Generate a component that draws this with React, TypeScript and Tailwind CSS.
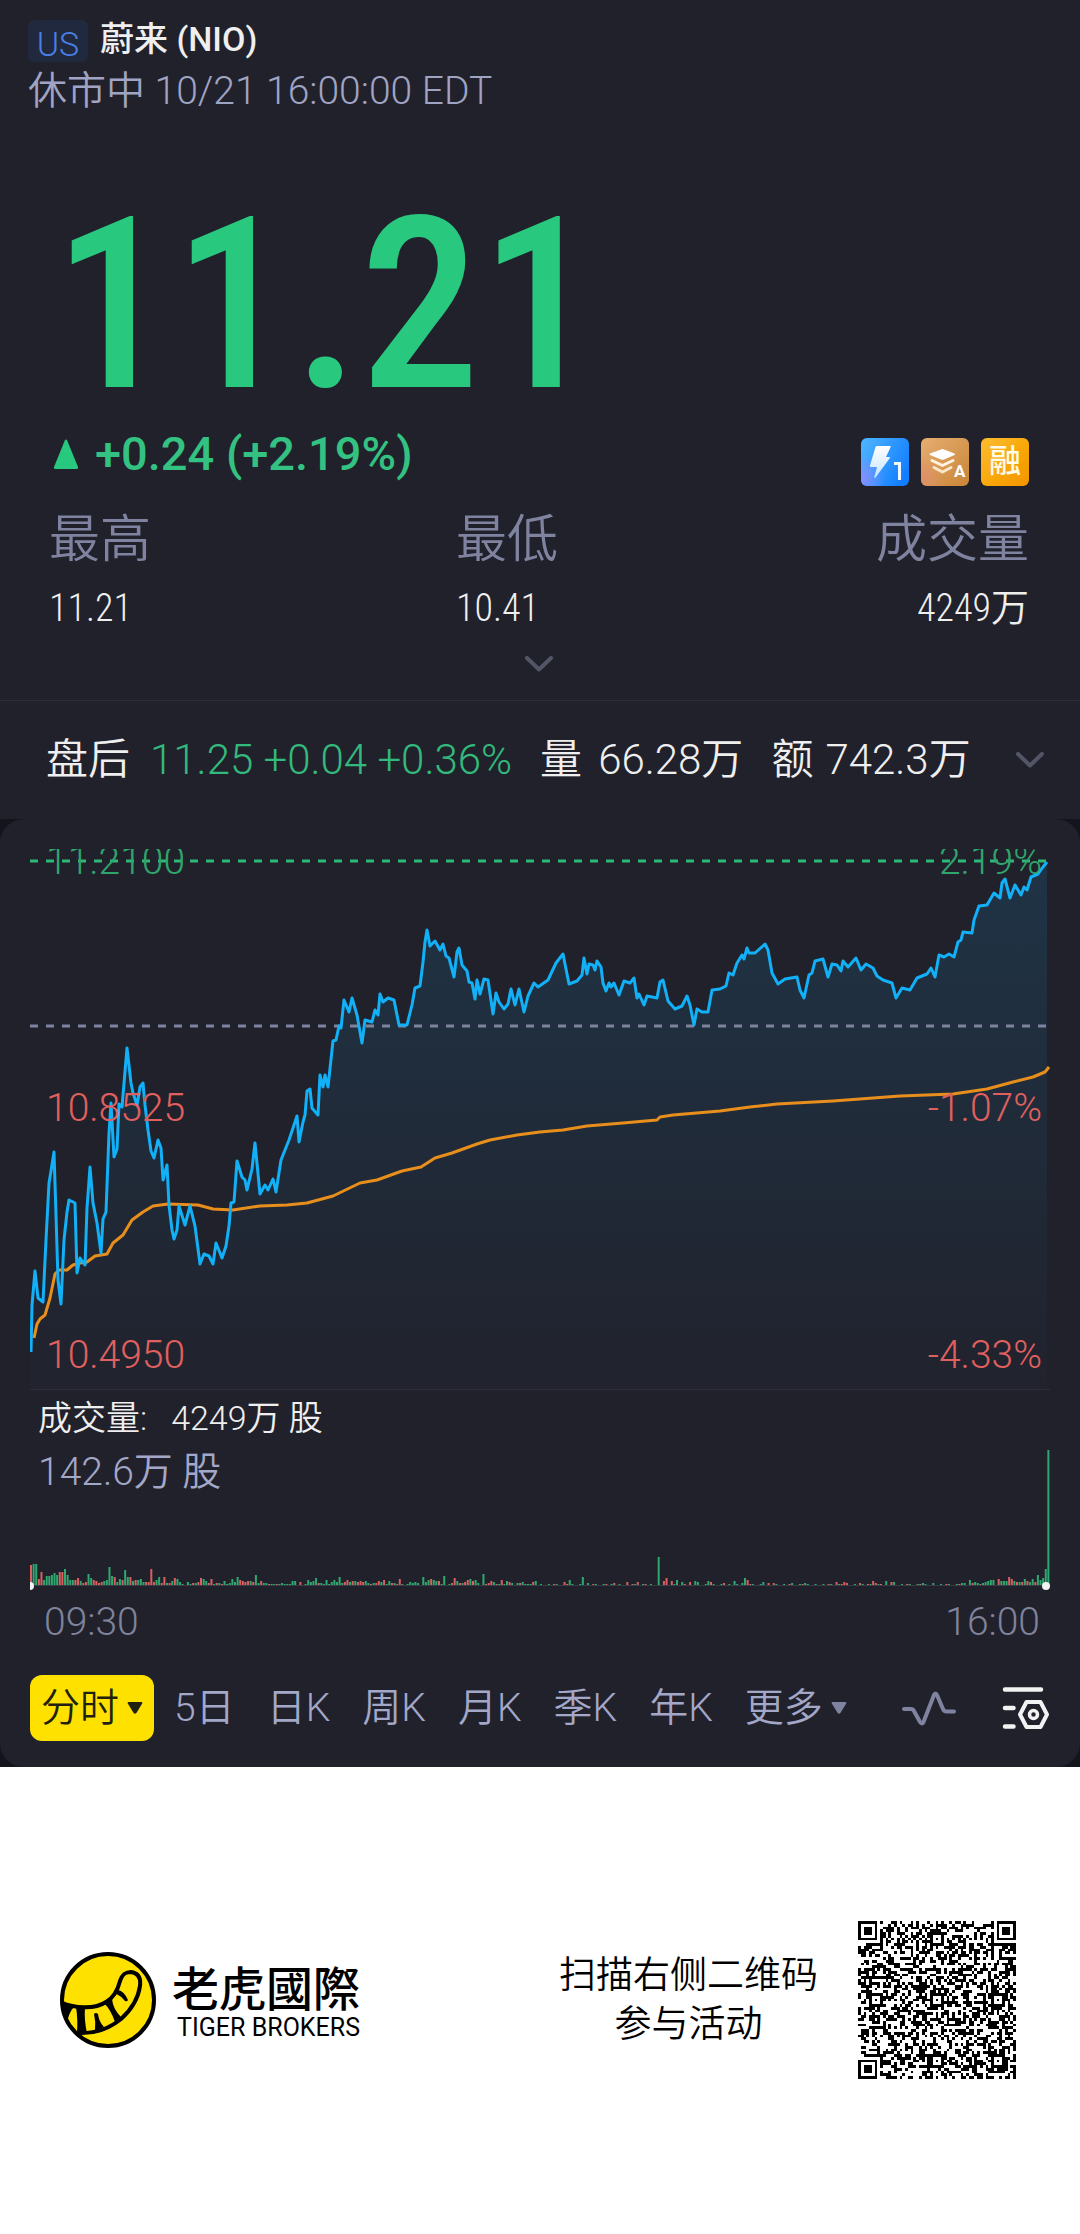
import { useId, useState } from 'react';

type Point = [number, number];

const CHART_W = 1020;
const CHART_H = 540;

const PRICE: Point[] = [
  [1, 503], [2, 456], [5, 422], [8, 449], [13, 453], [16, 391], [19, 334], [21, 322], [24, 303], [26, 366],
  [28, 431], [31, 455], [34, 391], [37, 363], [39, 351], [45, 354], [47, 424], [50, 409], [55, 416], [57, 359],
  [60, 318], [63, 354], [67, 374], [71, 404], [73, 370], [76, 363], [79, 284], [81, 254], [84, 308], [87, 300],
  [89, 255], [92, 258], [97, 199], [101, 234], [103, 244], [107, 256], [110, 238], [113, 234], [115, 256], [118, 281],
  [121, 302], [124, 309], [128, 291], [131, 299], [133, 331], [137, 316], [139, 356], [142, 381], [144, 390], [147, 381],
  [149, 357], [155, 376], [160, 357], [165, 377], [170, 415], [174, 405], [179, 407], [183, 415], [186, 394], [192, 409],
  [196, 397], [199, 377], [201, 354], [204, 353], [207, 312], [212, 328], [215, 331], [217, 341], [222, 320], [225, 294],
  [230, 345], [235, 336], [238, 341], [243, 330], [246, 343], [251, 311], [259, 291], [267, 267], [269, 293], [273, 273],
  [275, 266], [277, 242], [280, 240], [282, 259], [288, 266], [290, 226], [293, 238], [295, 226], [298, 238], [303, 192],
  [306, 191], [309, 177], [311, 179], [314, 151], [319, 163], [322, 149], [327, 166], [332, 194], [335, 171], [342, 173],
  [345, 161], [348, 166], [350, 145], [353, 153], [358, 149], [364, 151], [369, 176], [377, 176], [382, 156], [385, 139],
  [390, 137], [393, 113], [395, 93], [397, 81], [400, 97], [405, 92], [410, 101], [413, 95], [416, 107], [419, 109],
  [424, 128], [427, 103], [429, 99], [432, 116], [437, 122], [439, 133], [442, 134], [445, 150], [447, 131], [450, 145],
  [454, 130], [458, 131], [463, 165], [466, 144], [469, 153], [474, 160], [478, 155], [481, 140], [485, 156], [489, 140],
  [494, 163], [498, 147], [504, 134], [508, 138], [518, 131], [526, 114], [533, 105], [539, 135], [547, 132], [552, 126],
  [554, 109], [557, 125], [559, 115], [563, 116], [565, 121], [567, 112], [571, 118], [573, 134], [576, 142], [579, 134],
  [581, 138], [584, 134], [589, 146], [594, 132], [600, 134], [604, 129], [607, 149], [609, 145], [614, 156], [617, 147],
  [627, 149], [630, 133], [633, 131], [638, 152], [645, 160], [652, 157], [657, 147], [660, 156], [664, 176], [667, 160],
  [672, 163], [678, 163], [682, 141], [690, 140], [696, 137], [699, 124], [703, 126], [707, 114], [712, 106], [714, 110],
  [717, 99], [719, 104], [725, 104], [735, 95], [738, 101], [742, 124], [748, 135], [755, 130], [767, 128], [770, 141],
  [774, 149], [779, 126], [782, 124], [785, 112], [793, 110], [798, 128], [802, 115], [807, 116], [811, 122], [813, 112],
  [818, 118], [826, 109], [831, 121], [836, 115], [843, 119], [847, 127], [853, 131], [862, 134], [866, 149], [872, 139],
  [880, 141], [887, 129], [897, 125], [901, 119], [905, 128], [909, 106], [914, 108], [919, 105], [924, 108], [928, 93],
  [931, 91], [933, 83], [942, 84], [944, 71], [949, 57], [957, 56], [964, 44], [970, 49], [972, 34], [975, 30],
  [980, 49], [985, 36], [991, 46], [994, 38], [997, 41], [1001, 28], [1008, 25], [1013, 18], [1017, 13],
];

const AVERAGE: Point[] = [
  [4, 489], [7, 475], [10, 470], [15, 466], [20, 449], [25, 425], [29, 421], [37, 421], [43, 416], [50, 414],
  [57, 413], [65, 407], [77, 405], [83, 394], [93, 386], [102, 371], [113, 363], [123, 357], [138, 355], [168, 356],
  [183, 360], [203, 361], [230, 357], [257, 356], [277, 354], [303, 347], [330, 334], [347, 331], [372, 322], [391, 318],
  [405, 309], [422, 304], [447, 295], [460, 291], [487, 286], [510, 283], [533, 281], [557, 277], [593, 274], [627, 271],
  [630, 268], [643, 266], [690, 262], [720, 258], [747, 255], [803, 252], [870, 247], [923, 245], [957, 240], [983, 233],
  [1003, 228], [1015, 223], [1019, 218],
];

// bar heights minute by minute, negative = down tick
const VOLUME_OPEN = [
  -20, 21, 21, -6, -13, 5, 9, 9, 10, 12, 10, -13, -13, 16, 10, 5, 5, -5, -7, 4, -2, -3, 11, 7, -5, -4, -2, -3, 4, 5,
  18, 9, -8, 3, 6, -5, 15, 8, -8, 4, -5, 5, 6, 3, -3, -3, -16, -3, 5, 8, -2, -8, 2, -2, 4, -7, 6, 3, 1, 0,
  3, 1, -2, 2, -3, -7, 6, 4, -2, -6, 1, -2, 2, -1, 4, 1, 2, 6, 3, 8, -5, -4, -3, -4, 4, -3, 10, 2, -4, 2,
  2, -1, 1, 1, -1, 1, 2, 1, 1, 1, 4, 4, 0, -3, 0, 1, 5, 3, 4, 7, -2, 2, 1, 5, 1, 3, 5, 3, 8, 2,
  -3, -5, 3, -4, 4, -3, -4, -3, 4, 2, -1, 2, -2, -4, 3, -5, 1, 4, -2, 2, -1, -6, 1, 0, 1, 3, 2, 3, 2, 0,
  8, 3, 5, -6, 5, 4, -4, 1, 9, 0, 1, -2, -7, 4, -2, 2, -3, -5, 6, -4, 5, 2, 0, 11, -1, -2, -4, 3, -1, 1,
  -5, 1, 4, -3, 2, 0, 2, -2, 3, 1, 1, 1, -3, 4,
];
const VOLUME_CLOSE = [
  2, 2, 0, 5, -2, 3, 2, -1, 2, 3, 4, 5, 5, 0, -6, 4, 4, 4, -8, -6,
  4, -3, 3, -3, 6, -4, 3, 6, -3, 10, 5, 7, 16,
];
const VOLUME_SPIKES: Record<number, number> = {
  204: -3, 206: 5, 211: 8, 213: 2, 223: -2, 228: -3, 232: -3, 240: 28, 242: -4, 243: -7, 245: -4, 247: 5,
  249: 3, 252: -3, 254: 4, 255: 3, 259: 4, 260: -3, 265: -2, 269: 4, 272: 2, 273: 7, 274: -5, 280: 3, 282: -2,
  284: -2, 291: 2, 296: 2, 308: -3, 311: -3, 312: -2, 317: -2, 322: -4, 323: -2, 327: 4, 329: -3, 330: 3, 341: 2, 345: 2,
};
const MINUTES = 390;

const volumeAt = (i: number) => {
  if (i === MINUTES - 1) return 135;
  if (i < VOLUME_OPEN.length) return VOLUME_OPEN[i];
  const fromClose = i - (MINUTES - 1 - VOLUME_CLOSE.length);
  if (fromClose >= 0) return VOLUME_CLOSE[fromClose];
  if (VOLUME_SPIKES[i] !== undefined) return VOLUME_SPIKES[i];
  return i % 3 === 0 ? 1 : i % 5 === 0 ? -1 : 0;
};

const toPath = (points: Point[]) => points.map(([x, y], i) => `${i ? 'L' : 'M'}${x} ${y}`).join('');

const STATS = [
  { label: '最高', value: '11.21', align: 'text-left' },
  { label: '最低', value: '10.41', align: 'text-left' },
  { label: '成交量', value: '4249万', align: 'text-right' },
];

const PERIODS = ['5日', '日K', '周K', '月K', '季K', '年K'];

function Chevron() {
  return (
    <svg width="28" height="16" viewBox="0 0 28 16" fill="none" aria-hidden="true">
      <path d="M2 2l12 11.5L26 2" stroke="#515566" strokeWidth="4" strokeLinecap="round" strokeLinejoin="round" />
    </svg>
  );
}

function Caret() {
  return (
    <svg width="16" height="12" viewBox="0 0 16 12" fill="currentColor" aria-hidden="true">
      <path d="M2 0h12q2 0 1.200 1.600L9.400 11q-1.400 1.600-2.800 0L.8 1.600Q0 0 2 0z" />
    </svg>
  );
}

function Badges() {
  return (
    <div className="flex gap-3 mt-3">
      <svg width="48" height="48" viewBox="0 0 48 48" role="img" aria-label="Level 1">
        <defs>
          <linearGradient id="l1" x1="0" y1="0.200" x2="1" y2="0.700">
            <stop offset="0" stopColor="#4cb2ff" />
            <stop offset="1" stopColor="#117dff" />
          </linearGradient>
          <radialGradient id="l1glow" cx="0" cy="0.850" r="0.500">
            <stop offset="0" stopColor="#8a8cff" />
            <stop offset="1" stopColor="#8a8cff" stopOpacity="0" />
          </radialGradient>
          <linearGradient id="bolt" x1="0" y1="0" x2="0" y2="1">
            <stop offset="0" stopColor="#fff" />
            <stop offset="1" stopColor="#c4e4ff" />
          </linearGradient>
        </defs>
        <rect width="48" height="48" rx="6" fill="url(#l1)" />
        <rect width="48" height="48" rx="6" fill="url(#l1glow)" />
        <path d="M16 8h13q1 0 .6 1L25 19h3q1.500 0 .6 1.400L14.500 39.500q-1.500 1.300-1.200-.5L16 29h-6q-1.500 0-1-1.500L14.500 9q.4-1 1.500-1z" fill="url(#bolt)" />
        <path d="M33 25.500h5.500V42" fill="none" stroke="#f2f9ff" strokeWidth="3" />
      </svg>
      <svg width="48" height="48" viewBox="0 0 48 48" role="img" aria-label="Stack A">
        <defs>
          <linearGradient id="la" x1="0" y1="0" x2="1" y2="1">
            <stop offset="0" stopColor="#e6ae72" />
            <stop offset="1" stopColor="#c98536" />
          </linearGradient>
          <radialGradient id="laglow" cx="0" cy="0.850" r="0.450">
            <stop offset="0" stopColor="#de8f6c" />
            <stop offset="1" stopColor="#de8f6c" stopOpacity="0" />
          </radialGradient>
        </defs>
        <rect width="48" height="48" rx="6" fill="url(#la)" />
        <rect width="48" height="48" rx="6" fill="url(#laglow)" />
        <path d="M20 11.400q1.500-.6 3 0l10.500 4q1.400.8 0 1.600L23 21.500q-1.500.7-3 0L9 17q-1.400-.8 0-1.600z" fill="#fff" />
        <path d="M11 22.500l10.500 5 10.500-5" fill="none" stroke="#fff3e0" strokeWidth="3" strokeLinecap="round" strokeLinejoin="round" />
        <path d="M13 29.500l8.500 4.500 8.500-4.500" fill="none" stroke="#fbe6cc" strokeWidth="3" strokeLinecap="round" strokeLinejoin="round" />
        <text x="33" y="39" fontSize="17" fontWeight="700" fontFamily="Roboto, sans-serif" fill="#fff">A</text>
      </svg>
      <span className="w-12 h-12 rounded-md bg-linear-to-br from-[#fdbd2e] via-[#f9a90a] to-[#f39400] text-[#fffbe6] text-[32px] leading-[46px] font-medium text-center">
        融
      </span>
    </div>
  );
}

function PriceChart() {
  const fill = useId();
  return (
    <div className="relative mx-[30px] h-[541px] overflow-hidden border-b border-[#2e2e3b]">
      <svg className="block w-full h-full" viewBox={`0 0 ${CHART_W} ${CHART_H}`} preserveAspectRatio="none" aria-hidden="true">
        <defs>
          <linearGradient id={fill} gradientUnits="userSpaceOnUse" x1="0" y1="12" x2="0" y2={CHART_H}>
            <stop offset="0" stopColor="#12b0f7" stopOpacity="0.130" />
            <stop offset="1" stopColor="#12b0f7" stopOpacity="0.010" />
          </linearGradient>
        </defs>
        <path d={`${toPath(PRICE)}V${CHART_H}H1z`} fill={`url(#${fill})`} />
        <path d={`M0 12H${CHART_W}`} stroke="#2fb878" strokeWidth="3" strokeDasharray="8 8" />
        <path d={`M0 177H${CHART_W}`} stroke="#7f839f" strokeWidth="3" strokeDasharray="8 8" />
        <path d={toPath(AVERAGE)} fill="none" stroke="#e88e1c" strokeWidth="3" strokeLinejoin="round" />
        <path d={toPath(PRICE)} fill="none" stroke="#12b0f7" strokeWidth="3" strokeLinejoin="round" />
      </svg>
      <div className="absolute inset-x-4 -top-2 bottom-[14px] flex justify-between text-[39px] leading-10 text-[#e0605f]">
        <div className="flex flex-col justify-between">
          <span className="text-[#2fa56d]">11.2100</span>
          <span>10.8525</span>
          <span>10.4950</span>
        </div>
        <div className="flex flex-col justify-between text-right -mr-2">
          <span className="text-[#2fa56d]">2.19%</span>
          <span>-1.07%</span>
          <span>-4.33%</span>
        </div>
      </div>
    </div>
  );
}

function VolumeChart() {
  const step = CHART_W / MINUTES;
  return (
    <div className="mx-[30px] grid">
      <div className="[grid-area:1/1] pl-2 pt-2 pb-24">
        <p className="flex gap-6 text-[34px] leading-10 text-[#efefef]">
          <span>成交量:</span>
          <span>4249万 股</span>
        </p>
        <p className="mt-2.5 text-[39px] leading-12 text-[#a3a7c8]">142.6万 股</p>
      </div>
      <svg className="[grid-area:1/1] self-end w-full h-[142px]" viewBox={`0 0 ${CHART_W} 142`} preserveAspectRatio="none" aria-hidden="true">
        <path d={`M0 135.500H${CHART_W}`} stroke="#3a3b48" strokeWidth="1" />
        {Array.from({ length: MINUTES }, (_, i) => {
          const v = volumeAt(i);
          const h = Math.abs(v);
          return <rect key={i} x={i * step} y={135 - h} width="2" height={h} fill={v < 0 ? '#d9605f' : '#2ea86f'} />;
        })}
        <circle cx="0" cy="136" r="4" fill="#f2f2f2" />
        <circle cx="1016" cy="136" r="4" fill="#f2f2f2" />
      </svg>
    </div>
  );
}

function PeriodTabs() {
  const [active, setActive] = useState('分时');
  const color = (name: string) => (active === name ? 'text-[#ffe100]' : 'text-[#a3a7c8]');
  return (
    <div className="mx-[30px] mt-[29px] pb-[26px] flex items-center text-[39px] leading-[66px]">
      <button
        onClick={() => setActive('分时')}
        className="h-[66px] rounded-xl bg-[#ffe100] text-[#21210f] px-[11px] flex items-center gap-2"
      >
        分时
        <Caret />
      </button>
      <nav className="ml-5 flex gap-8">
        {PERIODS.map(p => (
          <button key={p} onClick={() => setActive(p)} className={color(p)}>
            {p}
          </button>
        ))}
        <button onClick={() => setActive('更多')} className={`flex items-center gap-2 ${color('更多')}`}>
          更多
          <span className="text-[#7f839f]">
            <Caret />
          </span>
        </button>
      </nav>
      <button aria-label="指标" className="ml-auto">
        <svg width="54" height="40" viewBox="0 0 54 40" fill="none" stroke="#7f839f" strokeWidth="4" strokeLinecap="round" strokeLinejoin="round">
          <path d="M2 21h7q2 0 3 2l6 11q2 3 3.500 0L32 7q1.500-3 3 0l6 14q1 2.500 3.500 2.500H52" />
        </svg>
      </button>
      <button aria-label="设置" className="ml-[46px]">
        <svg width="48" height="44" viewBox="0 0 48 44" fill="none" stroke="#f2f2f2" strokeWidth="4.500" strokeLinecap="round" strokeLinejoin="round">
          <path d="M3 3.500h36M3 22h8.500M3 40.500h8.500" />
          <path d="M24.500 16h14l6.500 12.500-6.500 12.500h-14L18 28.500z" strokeWidth="4" />
          <circle cx="31.500" cy="28.500" r="4" strokeWidth="3.500" />
        </svg>
      </button>
    </div>
  );
}

function TigerLogo() {
  return (
    <svg width="96" height="96" viewBox="0 0 96 96" aria-hidden="true">
      <clipPath id="disc">
        <circle cx="48" cy="48" r="46" />
      </clipPath>
      <circle cx="48" cy="48" r="46" fill="#ffe100" />
      <g clipPath="url(#disc)">
        <path d="M0 50C14 56 34 58 46 50 55 45 58 37 60 29 63 20 68 20 71 20 78 21 81 26 80 34 78 48 71 58 61 67 50 76 36 82 18 81" fill="none" stroke="#000" strokeWidth="4" />
        <path d="M0 50l14 5q-5 5-7 16L0 62z" />
        <path d="M16 55h9q-1 13 2 26h-10q1-14-1-26z" />
        <path d="M34 62q2-2 4 0 1 8 6 13l-9 4q1-9-1-17z" />
        <path d="M44 51l8-4q1 10 9 18l-6 5q-4-12-11-19z" />
        <path d="M55 41l3-3q6 1 10 10-1 2-3 1-4-5-10-8z" />
      </g>
      <circle cx="48" cy="48" r="46" fill="none" stroke="#000" strokeWidth="4" />
    </svg>
  );
}

const QR_SIZE = 57;

function finderCell(x: number, y: number) {
  const edge = Math.max(Math.abs(x - 3), Math.abs(y - 3));
  return edge === 3 || edge <= 1;
}

function qrPath() {
  let seed = 20211;
  let d = '';
  const last = QR_SIZE - 7;
  const centers = [6, 28, 50];
  for (let y = 0; y < QR_SIZE; y++) {
    for (let x = 0; x < QR_SIZE; x++) {
      seed = (seed * 48271) % 2147483647;
      let on = seed % 1000 < 500;
      if (x === 6 || y === 6) on = (x + y) % 2 === 0;
      for (const cx of centers) {
        for (const cy of centers) {
          const r = Math.max(Math.abs(x - cx), Math.abs(y - cy));
          if (r <= 2) on = r !== 1;
        }
      }
      if (x < 8 && y < 8) on = x < 7 && y < 7 && finderCell(x, y);
      if (x >= last - 1 && y < 8) on = x >= last && y < 7 && finderCell(x - last, y);
      if (x < 8 && y >= last - 1) on = x < 7 && y >= last && finderCell(x, y - last);
      if (on) d += `M${x} ${y}h1v1h-1z`;
    }
  }
  return d;
}

const QR_PATH = qrPath();

export default function App() {
  return (
    <div className="bg-white font-[Roboto,'Noto_Sans_CJK_SC',sans-serif] font-[350]">
      <main className="bg-[#21212b] text-[#efefef]">
        <header className="px-7 pt-5">
          <div className="flex items-start gap-3">
            <span className="w-[60px] h-[42px] rounded-md bg-[#20293d] text-[#4a7fe6] text-[34px] leading-[48px] text-center">US</span>
            <h1 className="text-[34px] leading-[38px] font-medium">蔚来 (NIO)</h1>
          </div>
          <p className="mt-1 text-[39px] leading-[50px] text-[#a0a4c4]">休市中 10/21 16:00:00 EDT</p>
        </header>

        <section className="pl-[49px] pr-[51px] pt-20">
          <div className="pl-1 text-[240px] leading-[218px] font-medium text-[#29c87f] font-['Roboto_Condensed',Roboto,sans-serif]">11.21</div>
          <div className="mt-3 flex items-start justify-between">
            <div className="flex items-center text-[47px] leading-14 font-medium text-[#33c281]">
              <svg className="mx-1" width="26" height="30" viewBox="0 0 26 30" fill="#29c87f" aria-hidden="true">
                <path d="M11.800 1.500q1.200-2 2.400 0L25 28q.4 2-1.500 2h-21Q.6 30 1 28z" />
              </svg>
              <span className="ml-3">+0.24 (+2.19%)</span>
            </div>
            <Badges />
          </div>
          <dl className="mt-6 grid grid-cols-[407px_1fr_auto]">
            {STATS.map(s => (
              <div key={s.label} className={s.align}>
                <dt className="text-[51px] leading-[60px] text-[#7f839f]">{s.label}</dt>
                <dd className="mt-3.5 text-[38px] leading-12 font-[350] font-['Roboto_Condensed',Roboto,'Noto_Sans_CJK_SC',sans-serif]">{s.value}</dd>
              </div>
            ))}
          </dl>
          <button aria-label="展开" className="block mx-auto pt-6 pb-7">
            <Chevron />
          </button>
        </section>

        <section className="border-t border-[#2e2e3b] h-[119px] pl-[46px] pr-9 flex items-center text-[42px] leading-12 whitespace-nowrap">
          <span>盘后</span>
          <span className="ml-5 text-[#33b97c]">11.25 +0.04 +0.36%</span>
          <span className="ml-7">量</span>
          <span className="ml-4">66.28万</span>
          <span className="ml-7">额</span>
          <span className="ml-3">742.3万</span>
          <button aria-label="更多盘后数据" className="ml-auto">
            <Chevron />
          </button>
        </section>

        <div className="bg-[#14141d]">
          <section className="bg-[#21212b] rounded-3xl pt-[30px]">
            <PriceChart />
            <VolumeChart />
            <div className="mt-1.5 px-10 flex justify-between text-[39px] leading-12 text-[#7f839c]">
              <time className="pl-1">09:30</time>
              <time>16:00</time>
            </div>
            <PeriodTabs />
          </section>
        </div>
      </main>

      <footer className="py-[154px] pl-[60px] pr-16 flex items-center text-black">
        <TigerLogo />
        <div className="ml-4">
          <div className="text-[47px] leading-[56px] font-medium font-['Noto_Sans_CJK_TC',sans-serif]">老虎國際</div>
          <div className="text-[25px] leading-7 text-right font-normal">TIGER BROKERS</div>
        </div>
        <p className="ml-auto text-[37px] leading-[49px] text-center">
          扫描右侧二维码
          <br />
          参与活动
        </p>
        <svg className="ml-10" width="158" height="158" viewBox={`0 0 ${QR_SIZE} ${QR_SIZE}`} shapeRendering="crispEdges" role="img" aria-label="二维码">
          <path d={QR_PATH} />
        </svg>
      </footer>
    </div>
  );
}
